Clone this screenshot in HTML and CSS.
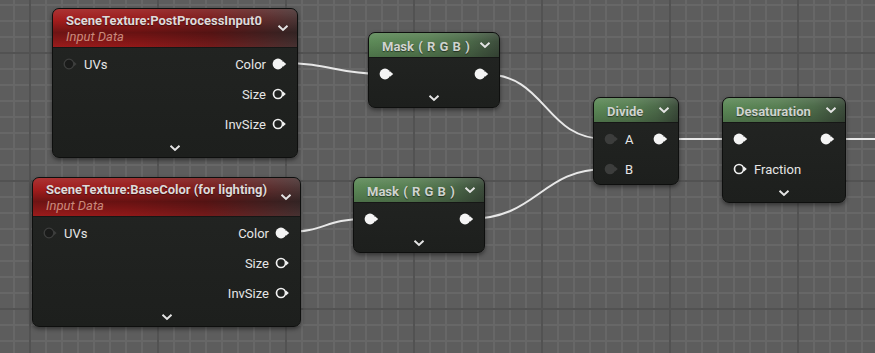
FILE: index.html
```html
<!DOCTYPE html>
<html lang="en">
<head>
  <meta charset="UTF-8" />
  <title>Material Graph</title>
  <link rel="stylesheet" href="styles.css">
</head>
<body>
  <svg class="defs" width="0" height="0">
    <symbol id="pin-full" viewBox="0 0 15 12">
      <circle cx="6" cy="6" r="5.4" fill="#f4f4f4"/>
      <path d="M11 3.2 L14.2 6 L11 8.8 Z" fill="#f4f4f4"/>
    </symbol>
    <symbol id="pin-ring" viewBox="0 0 15 12">
      <circle cx="6" cy="6" r="4.5" fill="none" stroke="#f0f0f0" stroke-width="1.7"/>
      <path d="M11 3.5 L13.8 6 L11 8.5 Z" fill="#f0f0f0"/>
    </symbol>
    <symbol id="pin-dark" viewBox="0 0 15 12">
      <circle cx="6" cy="6" r="4.8" fill="#1a1b1a" stroke="#3d3e3d" stroke-width="1.3"/>
      <path d="M11 3.8 L13.6 6 L11 8.2 Z" fill="#3d3e3d"/>
    </symbol>
    <symbol id="pin-grey" viewBox="0 0 15 12">
      <circle cx="6" cy="6" r="5.3" fill="#3c3d3c"/>
      <path d="M11 3.6 L13.8 6 L11 8.4 Z" fill="#3c3d3c"/>
    </symbol>
    <symbol id="chev" viewBox="0 0 12 8">
      <path d="M1.5 1.8 L6 6 L10.5 1.8" fill="none" stroke="#e4e4e4" stroke-width="2"/>
    </symbol>
  </svg>

  <div class="graph">
    <svg class="wires" width="875" height="353">
      <path d="M283 63 C 330 63, 336 74, 382 74"/>
      <path d="M483 74 C 548 74, 543 139, 606 139"/>
      <path d="M286 232 C 326 232, 324 219, 366 219"/>
      <path d="M468 219 C 538 219, 540 169, 606 169"/>
      <path d="M662 139 L 731 139"/>
      <path d="M831 139 L 875 139"/>
    </svg>

    <!-- SceneTexture: PostProcessInput0 -->
    <div class="node scene" style="left:52px; top:8px; width:244px;">
      <div class="head">
        <div class="titles">
          <div class="title">SceneTexture:PostProcessInput0</div>
          <div class="subtitle">Input Data</div>
        </div>
        <svg class="chev"><use href="#chev"/></svg>
      </div>
      <div class="body">
        <div class="row">
          <div class="in"><svg class="pin"><use href="#pin-dark"/></svg><span>UVs</span></div>
          <div class="out"><span>Color</span><svg class="pin"><use href="#pin-full"/></svg></div>
        </div>
        <div class="row">
          <div class="in"></div>
          <div class="out"><span>Size</span><svg class="pin"><use href="#pin-ring"/></svg></div>
        </div>
        <div class="row">
          <div class="in"></div>
          <div class="out"><span>InvSize</span><svg class="pin"><use href="#pin-ring"/></svg></div>
        </div>
      </div>
      <div class="foot"><svg class="chev"><use href="#chev"/></svg></div>
    </div>

    <!-- SceneTexture: BaseColor -->
    <div class="node scene" style="left:32px; top:177px; width:267px;">
      <div class="head">
        <div class="titles">
          <div class="title">SceneTexture:BaseColor (for lighting)</div>
          <div class="subtitle">Input Data</div>
        </div>
        <svg class="chev"><use href="#chev"/></svg>
      </div>
      <div class="body">
        <div class="row">
          <div class="in"><svg class="pin"><use href="#pin-dark"/></svg><span>UVs</span></div>
          <div class="out"><span>Color</span><svg class="pin"><use href="#pin-full"/></svg></div>
        </div>
        <div class="row">
          <div class="in"></div>
          <div class="out"><span>Size</span><svg class="pin"><use href="#pin-ring"/></svg></div>
        </div>
        <div class="row">
          <div class="in"></div>
          <div class="out"><span>InvSize</span><svg class="pin"><use href="#pin-ring"/></svg></div>
        </div>
      </div>
      <div class="foot"><svg class="chev"><use href="#chev"/></svg></div>
    </div>

    <!-- Mask nodes -->
    <div class="node math" style="left:368px; top:32px; width:130px;">
      <div class="head">
        <div class="title mask">Mask ( R G B )</div>
        <svg class="chev"><use href="#chev"/></svg>
      </div>
      <div class="body">
        <div class="row">
          <div class="in"><svg class="pin"><use href="#pin-full"/></svg></div>
          <div class="out"><svg class="pin"><use href="#pin-full"/></svg></div>
        </div>
      </div>
      <div class="foot"><svg class="chev"><use href="#chev"/></svg></div>
    </div>

    <div class="node math" style="left:353px; top:177px; width:130px;">
      <div class="head">
        <div class="title mask">Mask ( R G B )</div>
        <svg class="chev"><use href="#chev"/></svg>
      </div>
      <div class="body">
        <div class="row">
          <div class="in"><svg class="pin"><use href="#pin-full"/></svg></div>
          <div class="out"><svg class="pin"><use href="#pin-full"/></svg></div>
        </div>
      </div>
      <div class="foot"><svg class="chev"><use href="#chev"/></svg></div>
    </div>

    <!-- Divide -->
    <div class="node math nofoot" style="left:593px; top:97px; width:84px;">
      <div class="head">
        <div class="title">Divide</div>
        <svg class="chev"><use href="#chev"/></svg>
      </div>
      <div class="body">
        <div class="row">
          <div class="in"><svg class="pin"><use href="#pin-grey"/></svg><span>A</span></div>
          <div class="out"><svg class="pin"><use href="#pin-full"/></svg></div>
        </div>
        <div class="row">
          <div class="in"><svg class="pin"><use href="#pin-grey"/></svg><span>B</span></div>
          <div class="out"></div>
        </div>
      </div>
    </div>

    <!-- Desaturation -->
    <div class="node math" style="left:722px; top:97px; width:122px;">
      <div class="head">
        <div class="title">Desaturation</div>
        <svg class="chev"><use href="#chev"/></svg>
      </div>
      <div class="body">
        <div class="row">
          <div class="in"><svg class="pin"><use href="#pin-full"/></svg></div>
          <div class="out"><svg class="pin"><use href="#pin-full"/></svg></div>
        </div>
        <div class="row">
          <div class="in"><svg class="pin"><use href="#pin-ring"/></svg><span>Fraction</span></div>
          <div class="out"></div>
        </div>
      </div>
      <div class="foot"><svg class="chev"><use href="#chev"/></svg></div>
    </div>
  </div>
</body>
</html>
```

FILE: styles.css
```css
body {
  margin: 0;
  background: #5d5d5d;
  font-family: Roboto, "Liberation Sans", sans-serif;
  overflow: hidden;
}

.defs {
  position: absolute;
}

.graph {
  position: relative;
  width: 875px;
  height: 353px;
  overflow: hidden;
  background-color: #5d5d5d;
  background-image:
    linear-gradient(to right, #525252 2px, transparent 2px),
    linear-gradient(to bottom, #525252 2px, transparent 2px),
    linear-gradient(to right, #676767 2px, transparent 2px),
    linear-gradient(to bottom, #676767 2px, transparent 2px);
  background-size: 128px 128px, 128px 128px, 16px 16px, 16px 16px;
  background-position: 29px 0, 0 52px, 13px 0, 0 4px;
}

.wires {
  position: absolute;
  left: 0;
  top: 0;
}

.wires path {
  fill: none;
  stroke: #e8e8e8;
  stroke-width: 2;
}

.node {
  position: absolute;
  display: flex;
  flex-direction: column;
  background: linear-gradient(to bottom, #232523, #1d1f1d);
  border: 1px solid #0e0f0e;
  border-radius: 7px;
  box-shadow: 0 2px 4px rgba(0,0,0,0.45);
  overflow: hidden;
  color: #e6e6e6;
}

.head {
  display: flex;
  align-items: center;
  justify-content: space-between;
  gap: 4px;
  padding: 0 8px 0 13px;
  border-bottom: 1px solid #161716;
}

.scene .head {
  height: 38px;
  background:
    linear-gradient(to bottom, rgba(255,255,255,0.10) 0%, rgba(0,0,0,0) 30%, rgba(0,0,0,0.32) 62%, rgba(0,0,0,0.05) 100%),
    linear-gradient(to right, #a31d1d 0%, #981a1a 35%, #7a1c1c 65%, #4a3434 100%);
}

.math .head {
  height: 24px;
  padding-left: 13px;
  background:
    linear-gradient(to bottom, rgba(255,255,255,0.10) 0%, rgba(0,0,0,0) 35%, rgba(0,0,0,0.18) 100%),
    linear-gradient(to right, #5d8a58 0%, #587f53 45%, #4d6b4a 75%, #3d4d3c 100%);
}

.title {
  font-weight: bold;
  font-size: 13px;
  color: #dedada;
  white-space: nowrap;
  text-shadow: 0 1px 1px rgba(0,0,0,0.5);
}

.math .title {
  color: #cfd3cf;
  padding-top: 2px;
}

.title.mask {
  word-spacing: 1px;
}

.subtitle {
  font-style: italic;
  font-size: 13px;
  color: #c98a7c;
  margin-top: 1px;
}

.head .chev {
  width: 12px;
  height: 8px;
  flex: none;
}

.body {
  padding-top: 1px;
}

.row {
  height: 30px;
  display: flex;
  align-items: center;
  justify-content: space-between;
  font-size: 13px;
}

.in, .out {
  display: flex;
  align-items: center;
  gap: 6px;
}

.in {
  padding-left: 10px;
}

.out {
  padding-right: 10px;
}

.pin {
  width: 15px;
  height: 12px;
  flex: none;
}

.foot {
  height: 18px;
  display: flex;
  align-items: center;
  justify-content: center;
}

.foot .chev {
  width: 12px;
  height: 8px;
}
```
